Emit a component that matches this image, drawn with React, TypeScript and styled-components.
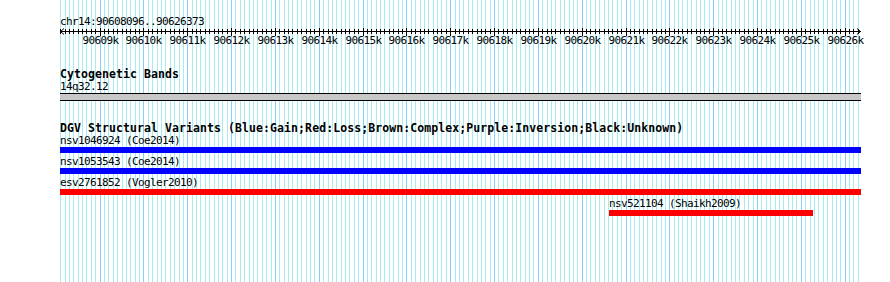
import React from 'react';
import styled, { createGlobalStyle } from 'styled-components';

const SEG_START = 90608096;
const SEG_END = 90626373;
const PAD_LEFT = 60;
const TRACK_WIDTH = 801;
const CANVAS_WIDTH = 890;
const CANVAS_HEIGHT = 282;
const SCALE = TRACK_WIDTH / (SEG_END - SEG_START);
const MONO = "'DejaVu Sans Mono', 'Liberation Mono', monospace";

const toX = (bp: number) => Math.round((bp - SEG_START) * SCALE);
const clampX = (x: number) => Math.max(0, Math.min(TRACK_WIDTH, x));

interface Variant {
  name: string;
  study: string;
  start: number;
  end: number;
  color: string;
}

const variants: Variant[] = [
  { name: 'nsv1046924', study: 'Coe2014', start: 90551200, end: 90702400, color: '#0000ff' },
  { name: 'nsv1053543', study: 'Coe2014', start: 90562800, end: 90688100, color: '#0000ff' },
  { name: 'esv2761852', study: 'Vogler2010', start: 90594500, end: 90641900, color: '#ff0000' },
  { name: 'nsv521104', study: 'Shaikh2009', start: 90620622, end: 90625276, color: '#ff0000' },
];

// every 100bp inside the segment
const gridStops: number[] = [];
for (let bp = Math.ceil(SEG_START / 100) * 100; bp <= SEG_END; bp += 100) gridStops.push(bp);

const GlobalStyle = createGlobalStyle`
  html, body {
    margin: 0;
    padding: 0;
    background: #ffffff;
  }
`;

const Canvas = styled.div`
  position: relative;
  width: ${CANVAS_WIDTH}px;
  height: ${CANVAS_HEIGHT}px;
  overflow: hidden;
  background: #ffffff;
  font-family: ${MONO};
  color: #000000;
`;

const GridLayer = styled.svg`
  position: absolute;
  left: 0;
  top: 0;
`;

const Tracks = styled.div`
  position: relative;
  display: flex;
  flex-direction: column;
  width: ${TRACK_WIDTH}px;
  padding: 15px 0 0 ${PAD_LEFT}px;
`;

const Coords = styled.div`
  height: 13px;
  font-size: 11px;
  letter-spacing: -0.62px;
  line-height: 13px;
  white-space: nowrap;
`;

const RulerSvg = styled.svg`
  display: block;
  overflow: visible;
`;

const Track = styled.section<{ $gap: number }>`
  display: flex;
  flex-direction: column;
  margin-top: ${(p) => p.$gap}px;
`;

const TrackTitle = styled.div`
  height: 12px;
  font-size: 11.5px;
  font-weight: bold;
  letter-spacing: 0.08px;
  line-height: 12px;
  white-space: nowrap;
`;

const FeatureLabel = styled.div`
  height: 13px;
  font-size: 11px;
  letter-spacing: -0.62px;
  line-height: 13px;
  white-space: nowrap;
`;

const Band = styled.div`
  height: 6px;
  background: #c8c8c8;
  border-top: 1px solid #000000;
  border-bottom: 1px solid #000000;
`;

const FeatureRow = styled.div`
  display: flex;
  flex-direction: column;
  margin-bottom: 2px;
`;

const FeatureBar = styled.div<{ $color: string }>`
  height: 6px;
  background: ${(p) => p.$color};
`;

const Grid: React.FC = () => (
  <GridLayer width={CANVAS_WIDTH} height={CANVAS_HEIGHT} shapeRendering="crispEdges">
    <line x1={PAD_LEFT + 0.5} y1={0} x2={PAD_LEFT + 0.5} y2={CANVAS_HEIGHT} stroke="#87cefa" />
    {gridStops.map((bp) => {
      const x = PAD_LEFT + toX(bp) + 0.5;
      const major = bp % 1000 === 0;
      return (
        <line
          key={bp}
          x1={x}
          y1={0}
          x2={x}
          y2={CANVAS_HEIGHT}
          stroke={major ? '#87cefa' : '#a8ecf0'}
        />
      );
    })}
  </GridLayer>
);

const Ruler: React.FC = () => (
  <RulerSvg width={TRACK_WIDTH} height={21}>
    <g shapeRendering="crispEdges" stroke="#000000">
      <line x1={0} y1={3.5} x2={TRACK_WIDTH} y2={3.5} />
      {gridStops.map((bp) => {
        const x = toX(bp) + 0.5;
        const major = bp % 1000 === 0;
        return <line key={bp} x1={x} y1={major ? 0 : 1} x2={x} y2={major ? 8 : 6} />;
      })}
    </g>
    <polyline points="4,0.5 0.5,3.5 4,6.5" fill="none" stroke="#000000" />
    <polyline points={`${TRACK_WIDTH - 4},0.5 ${TRACK_WIDTH - 0.5},3.5 ${TRACK_WIDTH - 4},6.5`} fill="none" stroke="#000000" />
    {gridStops
      .filter((bp) => bp % 1000 === 0)
      .map((bp) => (
        <text
          key={bp}
          x={toX(bp) + 0.5}
          y={16}
          textAnchor="middle"
          fontSize={11}
          letterSpacing={-0.62}
          fontFamily={MONO}
          fill="#000000"
        >
          {`${bp / 1000}k`}
        </text>
      ))}
  </RulerSvg>
);

export default function App() {
  return (
    <>
      <GlobalStyle />
      <Canvas>
        <Grid />
        <Tracks>
          <Coords>chr14:{SEG_START}..{SEG_END}</Coords>
          <Ruler />

          <Track $gap={19}>
            <TrackTitle>Cytogenetic Bands</TrackTitle>
            <FeatureLabel>14q32.12</FeatureLabel>
            <Band />
          </Track>

          <Track $gap={21}>
            <TrackTitle>
              DGV Structural Variants (Blue:Gain;Red:Loss;Brown:Complex;Purple:Inversion;Black:Unknown)
            </TrackTitle>
            {variants.map((v) => {
              const x1 = clampX(toX(v.start));
              const x2 = clampX(toX(v.end));
              return (
                <FeatureRow key={v.name} style={{ marginLeft: x1, width: x2 - x1 }}>
                  <FeatureLabel>
                    {v.name} ({v.study})
                  </FeatureLabel>
                  <FeatureBar $color={v.color} />
                </FeatureRow>
              );
            })}
          </Track>
        </Tracks>
      </Canvas>
    </>
  );
}
